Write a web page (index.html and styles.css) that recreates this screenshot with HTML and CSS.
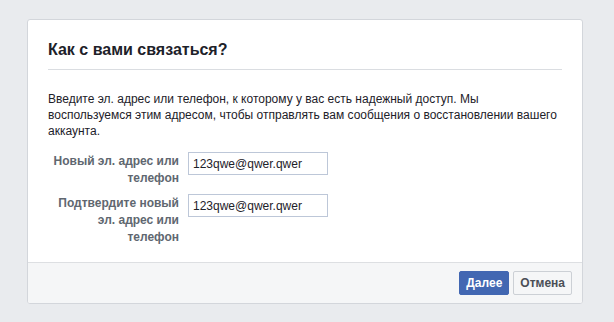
FILE: index.html
```html
<!DOCTYPE html>
<html lang="ru">
<head>
<meta charset="utf-8">
<link rel="stylesheet" href="styles.css">
</head>
<body>
<div class="dialog">
  <div class="content">
    <h2 class="title">Как с вами связаться?</h2>
    <p class="desc">Введите эл. адрес или телефон, к которому у вас есть надежный доступ. Мы воспользуемся этим адресом, чтобы отправлять вам сообщения о восстановлении вашего аккаунта.</p>
    <div class="form">
      <div class="row">
        <label class="label">Новый эл. адрес или телефон</label>
        <input class="field" type="text" value="123qwe@qwer.qwer">
      </div>
      <div class="row">
        <label class="label">Подтвердите новый эл. адрес или телефон</label>
        <input class="field" type="text" value="123qwe@qwer.qwer">
      </div>
    </div>
  </div>
  <div class="footer">
    <button class="btn btn-primary">Далее</button>
    <button class="btn btn-cancel">Отмена</button>
  </div>
</div>
</body>
</html>
```

FILE: styles.css
```css
html, body {
  margin: 0;
  padding: 0;
  background: #e9ebee;
}
body {
  padding: 19px 31px 0 27px;
  font-family: "Liberation Sans", Arial, sans-serif;
  color: #1d2129;
}
.dialog {
  width: 554px;
  background: #fff;
  border: 1px solid #d3d6db;
  border-radius: 3px;
  overflow: hidden;
}
.content {
  padding: 0 20px 16px;
}
.title {
  margin: 0;
  padding: 20px 0 9px;
  font-size: 16px;
  line-height: 20px;
  font-weight: bold;
  color: #1d2129;
  border-bottom: 1px solid #dadde1;
}
.desc {
  margin: 21px 0 0;
  font-size: 12px;
  line-height: 16px;
  color: #1d2129;
}
.form {
  margin-top: 13px;
  display: flex;
  flex-direction: column;
  gap: 7px;
}
.row {
  display: flex;
  align-items: flex-start;
  gap: 9px;
}
.label {
  width: 131px;
  text-align: right;
  font-size: 12px;
  line-height: 17px;
  font-weight: bold;
  color: #606770;
  padding-top: 1px;
}
.field {
  width: 140px;
  height: 23px;
  box-sizing: border-box;
  margin: 0;
  padding: 0 4px;
  border: 1px solid #bdc7d8;
  border-radius: 0;
  font-family: "Liberation Sans", Arial, sans-serif;
  font-size: 12px;
  color: #1d2129;
  outline: none;
}
.footer {
  background: #f5f6f7;
  border-top: 1px solid #dddfe2;
  padding: 8px 10px 8px 0;
  display: flex;
  justify-content: flex-end;
  gap: 4px;
}
.btn {
  height: 24px;
  margin: 0;
  padding: 0 6px;
  border-radius: 2px;
  font-family: "Liberation Sans", Arial, sans-serif;
  font-size: 12px;
  font-weight: bold;
  line-height: 22px;
  cursor: pointer;
}
.btn-primary {
  background: #4267b2;
  border: 1px solid #4267b2;
  color: #fff;
}
.btn-cancel {
  background: #f5f6f7;
  border: 1px solid #ccd0d5;
  color: #4b4f56;
}
```
